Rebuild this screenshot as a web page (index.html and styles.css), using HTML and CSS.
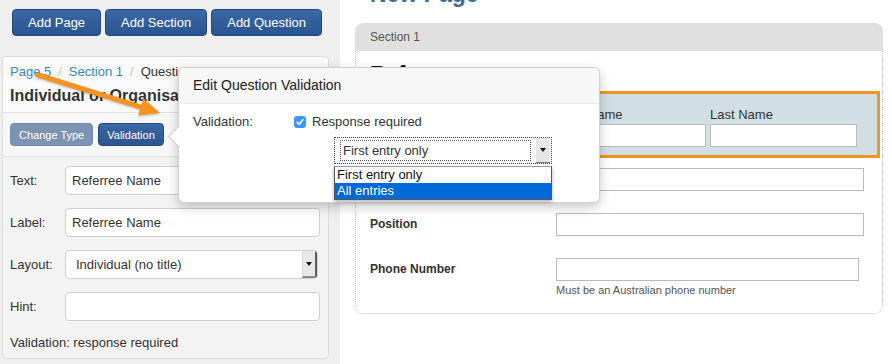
FILE: index.html
```html
<!DOCTYPE html>
<html lang="en">
<head>
  <meta charset="UTF-8" />
  <title>Form Builder</title>
  <link rel="stylesheet" href="styles.css">
</head>
<body>
  <div class="app">
    <aside class="sidebar">
      <div class="add-bar">
        <button class="btn">Add Page</button>
        <button class="btn">Add Section</button>
        <button class="btn">Add Question</button>
      </div>

      <div class="editor">
        <div class="editor-head">
          <div class="crumbs">
            <a href="#">Page 5</a><span class="sep">/</span><a href="#">Section 1</a><span class="sep">/</span>Question 1
          </div>
          <h2>Individual or Organisation</h2>
        </div>
        <div class="editor-tools">
          <button class="btn btn-sm btn-muted">Change Type</button>
          <button class="btn btn-sm">Validation</button>
        </div>
        <div class="editor-form">
          <div class="field">
            <label>Text:</label>
            <input class="text-input" type="text" value="Referree Name">
          </div>
          <div class="field">
            <label>Label:</label>
            <input class="text-input" type="text" value="Referree Name">
          </div>
          <div class="field">
            <label>Layout:</label>
            <div class="select-box">
              <span class="select-text">Individual (no title)</span>
              <span class="select-arrow"><i class="caret"></i></span>
            </div>
          </div>
          <div class="field">
            <label>Hint:</label>
            <input class="text-input" type="text" value="">
          </div>
          <p class="validation-note">Validation: response required</p>
        </div>
      </div>
    </aside>

    <main class="preview">
      <h1 class="page-title">New Page</h1>
      <section class="section">
        <div class="section-head">Section 1</div>
        <div class="section-body">
          <h3 class="q-title">Referee</h3>
          <div class="highlight">
            <div class="hl-label">Name</div>
            <div class="sub-field first">
              <label>First Name</label>
              <input type="text">
            </div>
            <div class="sub-field last">
              <label>Last Name</label>
              <input type="text">
            </div>
          </div>
          <div class="q-rows">
            <div class="q-row">
              <label>Organisation</label>
              <div><input type="text"></div>
            </div>
            <div class="q-row">
              <label>Position</label>
              <div><input type="text"></div>
            </div>
            <div class="q-row">
              <label>Phone Number</label>
              <div>
                <input class="phone" type="text">
                <div class="hint">Must be an Australian phone number</div>
              </div>
            </div>
          </div>
        </div>
      </section>
    </main>
  </div>

  <!-- validation popover, opened from the Validation button -->
  <div class="popover">
    <div class="popover-title">Edit Question Validation</div>
    <div class="popover-body">
      <div class="pop-row">
        <span class="pop-label">Validation:</span>
        <span class="check">
          <svg width="12" height="12" viewBox="0 0 12 12"><path d="M3.2 6.4 L5.1 8.3 L8.9 3.8" fill="none" stroke="#fff" stroke-width="1.6" stroke-linecap="round" stroke-linejoin="round"/></svg>
        </span>
        <span>Response required</span>
      </div>
      <div class="pop-select">
        <div class="dd">
          <span class="dd-text">First entry only</span>
          <span class="dd-btn"><i class="caret"></i></span>
        </div>
        <ul class="dd-list">
          <li>First entry only</li>
          <li class="selected">All entries</li>
        </ul>
      </div>
    </div>
  </div>

  <svg class="callout" width="170" height="125" viewBox="0 0 170 125">
    <line x1="38" y1="75" x2="142" y2="107.3" stroke="#f7931e" stroke-width="5" stroke-linecap="round"/>
    <polygon points="160,113 143.6,98.4 138.2,115.6" fill="#f7931e"/>
  </svg>
</body>
</html>
```

FILE: styles.css
```css
body {
  margin: 0;
  font-family: "Liberation Sans", Arial, Helvetica, sans-serif;
  font-size: 13px;
  color: #333;
  background: #fff;
  overflow: hidden;
}
.app {
  display: flex;
  height: 364px;
}

/* sidebar */
.sidebar {
  width: 340px;
  flex-shrink: 0;
  box-sizing: border-box;
  padding: 9px 11px 0 2px;
  background: #efefef;
}
.add-bar {
  display: flex;
  gap: 4px;
  padding-left: 10px;
}
.btn {
  font-family: inherit;
  font-size: 13px;
  color: #fff;
  height: 27px;
  padding: 0 15px;
  border: 1px solid #23497b;
  border-radius: 4px;
  background: linear-gradient(#3a68a6, #2a5590);
  cursor: pointer;
}
.btn-sm {
  font-size: 11px;
  height: 23px;
  padding: 0 8px;
}
.btn-muted {
  background: #7d93b3;
  border-color: #7189ab;
}
.editor {
  margin-top: 20px;
  background: #f3f3f3;
  border: 1px solid #dcdcdc;
  border-radius: 4px;
}
.editor-head {
  background: #fafafa;
  padding: 6px 7px;
  border-bottom: 1px solid #e2e2e2;
  border-radius: 4px 4px 0 0;
}
.crumbs {
  line-height: 18px;
  white-space: nowrap;
}
.crumbs a {
  color: #3a87b8;
  text-decoration: none;
}
.crumbs .sep {
  color: #c4c4c4;
  padding: 0 7px;
}
.editor-head h2 {
  margin: 5px 0 0;
  font-size: 16px;
  line-height: 20px;
  white-space: nowrap;
}
.editor-tools {
  display: flex;
  gap: 5px;
  padding: 10px 7px;
  background: #f7f7f7;
  border-bottom: 1px solid #e2e2e2;
}
.editor-form {
  padding: 9px 8px 6px 7px;
}
.field {
  display: flex;
  align-items: center;
  margin-bottom: 13px;
}
.field label {
  width: 55px;
  flex-shrink: 0;
  font-size: 13px;
}
.text-input {
  width: 255px;
  height: 29px;
  box-sizing: border-box;
  border: 1px solid #cfcfcf;
  border-radius: 4px;
  padding: 0 6px;
  font-family: inherit;
  font-size: 13px;
  color: #333;
  background: #fff;
}
.select-box {
  display: flex;
  width: 253px;
  height: 29px;
  box-sizing: border-box;
  border: 1px solid #cfcfcf;
  border-radius: 4px;
  background: #fff;
  overflow: hidden;
}
.select-text {
  flex: 1;
  padding-left: 10px;
  line-height: 27px;
}
.select-arrow {
  width: 12px;
  display: flex;
  align-items: center;
  justify-content: center;
  background: #e8e8e8;
  border-left: 1px solid #d6d6d6;
  border-right: 2px solid #5c5c5c;
  border-bottom: 2px solid #8a8a8a;
}
.caret {
  display: block;
  width: 0;
  height: 0;
  border-left: 3px solid transparent;
  border-right: 3px solid transparent;
  border-top: 4px solid #111;
}
.validation-note {
  margin: 0;
  line-height: 18px;
}

/* preview */
.preview {
  flex: 1;
  padding: 0 9px 0 15px;
}
.page-title {
  margin: -19px 0 16px;
  padding-left: 15px;
  font-size: 23px;
  line-height: 26px;
  color: #3b6e9a;
}
.section-head {
  height: 28px;
  line-height: 28px;
  padding-left: 15px;
  font-size: 12px;
  color: #555;
  background: #e0e0e0;
  border-radius: 8px 8px 0 0;
}
.section-body {
  border: 1px dotted #c6c6c6;
  border-top: 0;
  border-radius: 0 0 8px 8px;
  padding: 10px 15px 16px 14px;
}
.q-title {
  margin: 0 0 4px;
  font-size: 22px;
  line-height: 26px;
  color: #111;
}
.highlight {
  display: flex;
  margin: 0 -13px 0 -12px;
  padding: 13px 0 8px;
  border: 3px solid #f7941d;
  background: #d1dee3;
}
.hl-label {
  width: 198px;
  box-sizing: border-box;
  padding-left: 10px;
  font-weight: bold;
  font-size: 12px;
  line-height: 16px;
}
.sub-field {
  display: flex;
  flex-direction: column;
  gap: 1px;
  width: 147px;
}
.sub-field label {
  line-height: 16px;
}
.sub-field.first {
  margin-right: 4px;
}
.sub-field input,
.q-row input {
  box-sizing: border-box;
  height: 23px;
  border: 1px solid #bbb;
  background: #fff;
  margin: 0;
}
.sub-field input {
  width: 100%;
}
.q-rows {
  display: flex;
  flex-direction: column;
  gap: 22px;
  margin-top: 10px;
}
.q-row {
  display: grid;
  grid-template-columns: 186px auto;
  align-items: start;
}
.q-row label {
  font-weight: bold;
  font-size: 12px;
  line-height: 23px;
}
.q-row input {
  display: block;
  width: 308px;
}
.q-row input.phone {
  width: 303px;
}
.hint {
  margin-top: 2px;
  font-size: 11px;
  line-height: 14px;
  color: #555;
}

/* popover */
.popover {
  position: absolute;
  left: 178px;
  top: 67px;
  width: 422px;
  height: 136px;
  box-sizing: border-box;
  background: #fff;
  border: 1px solid rgba(0, 0, 0, 0.18);
  border-radius: 6px;
  box-shadow: 0 4px 12px rgba(0, 0, 0, 0.22);
}
.popover::before {
  content: "";
  position: absolute;
  left: -8px;
  top: 61px;
  width: 14px;
  height: 14px;
  background: #fff;
  border-left: 1px solid rgba(0, 0, 0, 0.2);
  border-bottom: 1px solid rgba(0, 0, 0, 0.2);
  transform: rotate(45deg);
}
.popover-title {
  height: 35px;
  line-height: 35px;
  padding-left: 14px;
  font-size: 14px;
  color: #222;
  background: #f7f7f7;
  border-bottom: 1px solid #ebebeb;
  border-radius: 6px 6px 0 0;
}
.popover-body {
  padding: 9px 14px 0;
}
.pop-row {
  display: flex;
  align-items: center;
  line-height: 18px;
}
.pop-label {
  width: 101px;
}
.check {
  width: 12px;
  height: 12px;
  border-radius: 3px;
  background: #3b99fc;
  margin-right: 6px;
  display: flex;
}
.pop-select {
  margin: 6px 0 0 141px;
  width: 218px;
}
.dd {
  display: flex;
  align-items: center;
  height: 27px;
  box-sizing: border-box;
  padding: 3px 1px 3px 5px;
  border: 1px dotted #444;
  background: #fff;
}
.dd-text {
  flex: 1;
  height: 19px;
  line-height: 19px;
  padding-left: 2px;
  border: 1px dotted #555;
  margin-right: 5px;
}
.dd-btn {
  width: 14px;
  align-self: stretch;
  margin: -3px 0;
  display: flex;
  align-items: center;
  justify-content: center;
  background: #e6e6e6;
  border-bottom: 1px solid #777;
}
.dd-list {
  list-style: none;
  margin: 2px 0 0;
  padding: 0;
  border: 1px solid #555;
  border-top-color: #999;
  background: #fff;
  box-shadow: 0 2px 4px rgba(0, 0, 0, 0.3);
}
.dd-list li {
  height: 16px;
  line-height: 16px;
  padding-left: 2px;
  color: #111;
}
.dd-list li.selected {
  background: #0069d9;
  color: #fff;
}

.callout {
  position: absolute;
  left: 0;
  top: 0;
  pointer-events: none;
  filter: drop-shadow(0 1px 1px rgba(0, 0, 0, 0.25));
}
```
